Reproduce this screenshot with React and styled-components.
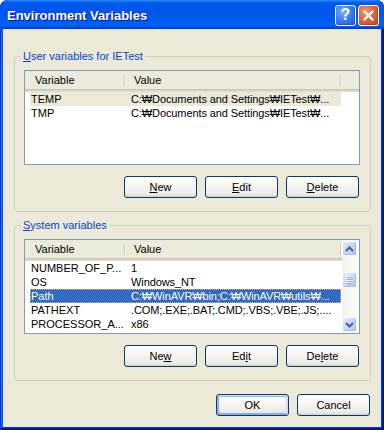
import React from 'react';
import styled, { createGlobalStyle } from 'styled-components';

const GlobalStyle = createGlobalStyle`
  html, body {
    margin: 0;
    padding: 0;
    background: #fff;
  }
  body {
    font-family: "Liberation Sans", Arial, sans-serif;
    font-size: 11px;
    color: #000;
  }
  * { box-sizing: border-box; }
`;

const Window = styled.div`
  width: 384px;
  height: 430px;
  display: flex;
  flex-direction: column;
  background: #ece9d8;
  border-radius: 8px 8px 0 0;
  padding-bottom: 3px;
  overflow: hidden;
  box-shadow: inset -1px -1px #00138c, inset 1px 1px #0831d9,
    inset -2px -2px #001ea0, inset 2px 2px #166aee,
    inset -3px -3px #003bda, inset 3px 3px #0855dd;
`;

const TitleBar = styled.div`
  height: 29px;
  flex-shrink: 0;
  display: flex;
  align-items: center;
  justify-content: space-between;
  padding: 0 5px 0 7px;
  border-radius: 8px 8px 0 0;
  background: linear-gradient(180deg, #2a8bfa, #0058ee 10%, #0054e8 40%, #0060f5 85%, #0058f0 93%, #003dd7 96%, #003dd7);
`;

const Title = styled.div`
  color: #fff;
  font-weight: bold;
  font-size: 13px;
  padding-top: 2px;
  text-shadow: 1px 1px #0f1089;
`;

const TitleButtons = styled.div`
  display: flex;
  gap: 2px;
  padding-top: 1px;
`;

const CaptionButton = styled.div`
  width: 21px;
  height: 21px;
  border: 1px solid #fff;
  border-radius: 3px;
  display: flex;
  align-items: center;
  justify-content: center;
  color: #fff;
  font-weight: bold;
  font-size: 16px;
  background: ${p => (p.$close
    ? 'radial-gradient(circle at 35% 30%, #f09a7c 0%, #e2643e 45%, #c9431d 100%)'
    : 'radial-gradient(circle at 35% 30%, #7fb1ff 0%, #3a7ff3 45%, #1a57d8 100%)')};
  box-shadow: inset -1px -1px rgba(0, 0, 0, 0.15);
`;

const Body = styled.div`
  flex: 1;
  margin: 0 3px;
  padding: 20px 0 0 11px;
`;

const Group = styled.fieldset`
  width: 357px;
  min-width: 0;
  margin: ${p => p.$top || 0}px 0 0 0;
  padding: 7px 10px 13px 9px;
  border: 1px solid #d0d0bf;
  border-radius: 4px;
`;

const Legend = styled.legend`
  color: #0046d5;
  line-height: 14px;
  padding: 0 2px;
  margin-left: -3px;
`;

const Key = styled.span`
  text-decoration: underline;
`;

const ListView = styled.div`
  height: 95px;
  display: flex;
  border: 1px solid #7f9db9;
  background: #fff;
`;

const Columns = styled.div`
  flex: 1;
  min-width: 0;
  display: flex;
  flex-direction: column;
`;

const Header = styled.div`
  height: 21px;
  flex-shrink: 0;
  display: flex;
  background: #ebeadb;
  box-shadow: inset 0 -1px #e2decd, inset 0 -2px #d6d2c2, inset 0 -3px #cbc7b8;
`;

const HeaderCell = styled.div`
  position: relative;
  width: ${p => p.$w}px;
  padding-left: ${p => p.$pad}px;
  line-height: 19px;
  &::after {
    content: '';
    position: absolute;
    right: 0;
    top: 4px;
    bottom: 6px;
    width: 1px;
    background: #c7c5b2;
    box-shadow: 1px 0 #fff;
  }
`;

const Rows = styled.div`
  padding-left: 5px;
`;

const Row = styled.div`
  display: flex;
  width: 311px;
  height: 14px;
  line-height: 14px;
  background: ${p => (p.$sel === 'active' ? '#316ac5' : p.$sel === 'inactive' ? '#ece9d8' : 'transparent')};
  color: ${p => (p.$sel === 'active' ? '#fff' : '#000')};
  outline: ${p => (p.$sel === 'active' ? '1px dotted #e8b050' : 'none')};
  outline-offset: -1px;
`;

const Cell = styled.div`
  width: ${p => (p.$w ? `${p.$w}px` : 'auto')};
  flex: ${p => (p.$w ? 'none' : 1)};
  padding-left: ${p => p.$pad}px;
  white-space: nowrap;
  overflow: hidden;
  letter-spacing: ${p => (p.$tight ? '-0.1px' : 'normal')};
`;

const ScrollBar = styled.div`
  width: 17px;
  flex-shrink: 0;
  display: flex;
  flex-direction: column;
  padding: 1px 1px 1px 0;
  background: linear-gradient(90deg, #f3f1ec, #fefefb);
`;

const ScrollPart = styled.div`
  width: 15px;
  height: ${p => p.$h || 15}px;
  margin-top: ${p => p.$mt || 0}px;
  border: 1px solid #fff;
  border-radius: 2px;
  display: flex;
  align-items: center;
  justify-content: center;
  background: linear-gradient(135deg, #e3ebfd, #c7d6fb 50%, #b4c8f7);
  box-shadow: inset -1px -1px #a9bde9;
`;

const Spacer = styled.div`
  flex: 1;
`;

const ButtonRow = styled.div`
  display: flex;
  justify-content: flex-end;
  gap: 8px;
  margin-top: ${p => p.$top}px;
  padding-right: 1px;
  width: ${p => (p.$w ? `${p.$w}px` : 'auto')};
`;

const Button = styled.button`
  width: 73px;
  height: 22px;
  padding: 0;
  font: inherit;
  color: #000;
  border: 1px solid #003c74;
  border-radius: 3px;
  background: linear-gradient(180deg, #fff, #ecebe6 86%, #d6d0c5);
  box-shadow: ${p => (p.$default
    ? 'inset -1px 1px #cee7ff, inset 1px 2px #98b8ea, inset -2px 2px #bcd4f6, inset 1px -1px #89ade4, inset 2px -2px #89ade4'
    : 'none')};
`;

const Chevron = ({ down }) => (
  <svg width="9" height="6" viewBox="0 0 9 6">
    <polyline
      points={down ? '1,1 4.5,4.5 8,1' : '1,5 4.5,1.5 8,5'}
      fill="none"
      stroke="#4d6185"
      strokeWidth="2"
    />
  </svg>
);

const Grip = () => (
  <svg width="7" height="8" viewBox="0 0 7 8">
    {[0, 2, 4, 6].map(y => (
      <g key={y}>
        <rect x="0" y={y} width="7" height="1" fill="#eef3fe" />
        <rect x="1" y={y + 1} width="6" height="1" fill="#8caae6" />
      </g>
    ))}
  </svg>
);

const userVars = [
  ['TEMP', 'C:₩Documents and Settings₩IETest₩...'],
  ['TMP', 'C:₩Documents and Settings₩IETest₩...'],
];

const systemVars = [
  ['NUMBER_OF_P...', '1'],
  ['OS', 'Windows_NT'],
  ['Path', 'C:₩WinAVR₩bin;C:₩WinAVR₩utils₩...'],
  ['PATHEXT', '.COM;.EXE;.BAT;.CMD;.VBS;.VBE;.JS;....'],
  ['PROCESSOR_A...', 'x86'],
];

const VarList = ({ items, selected, selMode, scroll }) => (
  <ListView>
    <Columns>
      <Header>
        <HeaderCell $w={100} $pad={10}>Variable</HeaderCell>
        <HeaderCell $w={216} $pad={9}>Value</HeaderCell>
      </Header>
      <Rows>
        {items.map(([name, value], i) => (
          <Row key={name} $sel={i === selected ? selMode : null}>
            <Cell $w={94} $pad={1}>{name}</Cell>
            <Cell $pad={7} $tight>{value}</Cell>
          </Row>
        ))}
      </Rows>
    </Columns>
    {scroll && (
      <ScrollBar>
        <ScrollPart><Chevron /></ScrollPart>
        <ScrollPart $mt={16} $h={16}><Grip /></ScrollPart>
        <Spacer />
        <ScrollPart><Chevron down /></ScrollPart>
      </ScrollBar>
    )}
  </ListView>
);

const App = () => (
  <>
    <GlobalStyle />
    <Window>
      <TitleBar>
        <Title>Environment Variables</Title>
        <TitleButtons>
          <CaptionButton>?</CaptionButton>
          <CaptionButton $close>
            <svg width="11" height="11" viewBox="0 0 11 11">
              <path d="M1.5 1.5 L9.5 9.5 M9.5 1.5 L1.5 9.5" stroke="#fff" strokeWidth="2.2" strokeLinecap="square" />
            </svg>
          </CaptionButton>
        </TitleButtons>
      </TitleBar>
      <Body>
        <Group>
          <Legend><Key>U</Key>ser variables for IETest</Legend>
          <VarList items={userVars} selected={0} selMode="inactive" />
          <ButtonRow $top={11}>
            <Button><Key>N</Key>ew</Button>
            <Button><Key>E</Key>dit</Button>
            <Button><Key>D</Key>elete</Button>
          </ButtonRow>
        </Group>
        <Group $top={6}>
          <Legend><Key>S</Key>ystem variables</Legend>
          <VarList items={systemVars} selected={2} selMode="active" scroll />
          <ButtonRow $top={11}>
            <Button>Ne<Key>w</Key></Button>
            <Button>Ed<Key>i</Key>t</Button>
            <Button>De<Key>l</Key>ete</Button>
          </ButtonRow>
        </Group>
        <ButtonRow $top={13} $w={357}>
          <Button $default>OK</Button>
          <Button>Cancel</Button>
        </ButtonRow>
      </Body>
    </Window>
  </>
);

export default App;
